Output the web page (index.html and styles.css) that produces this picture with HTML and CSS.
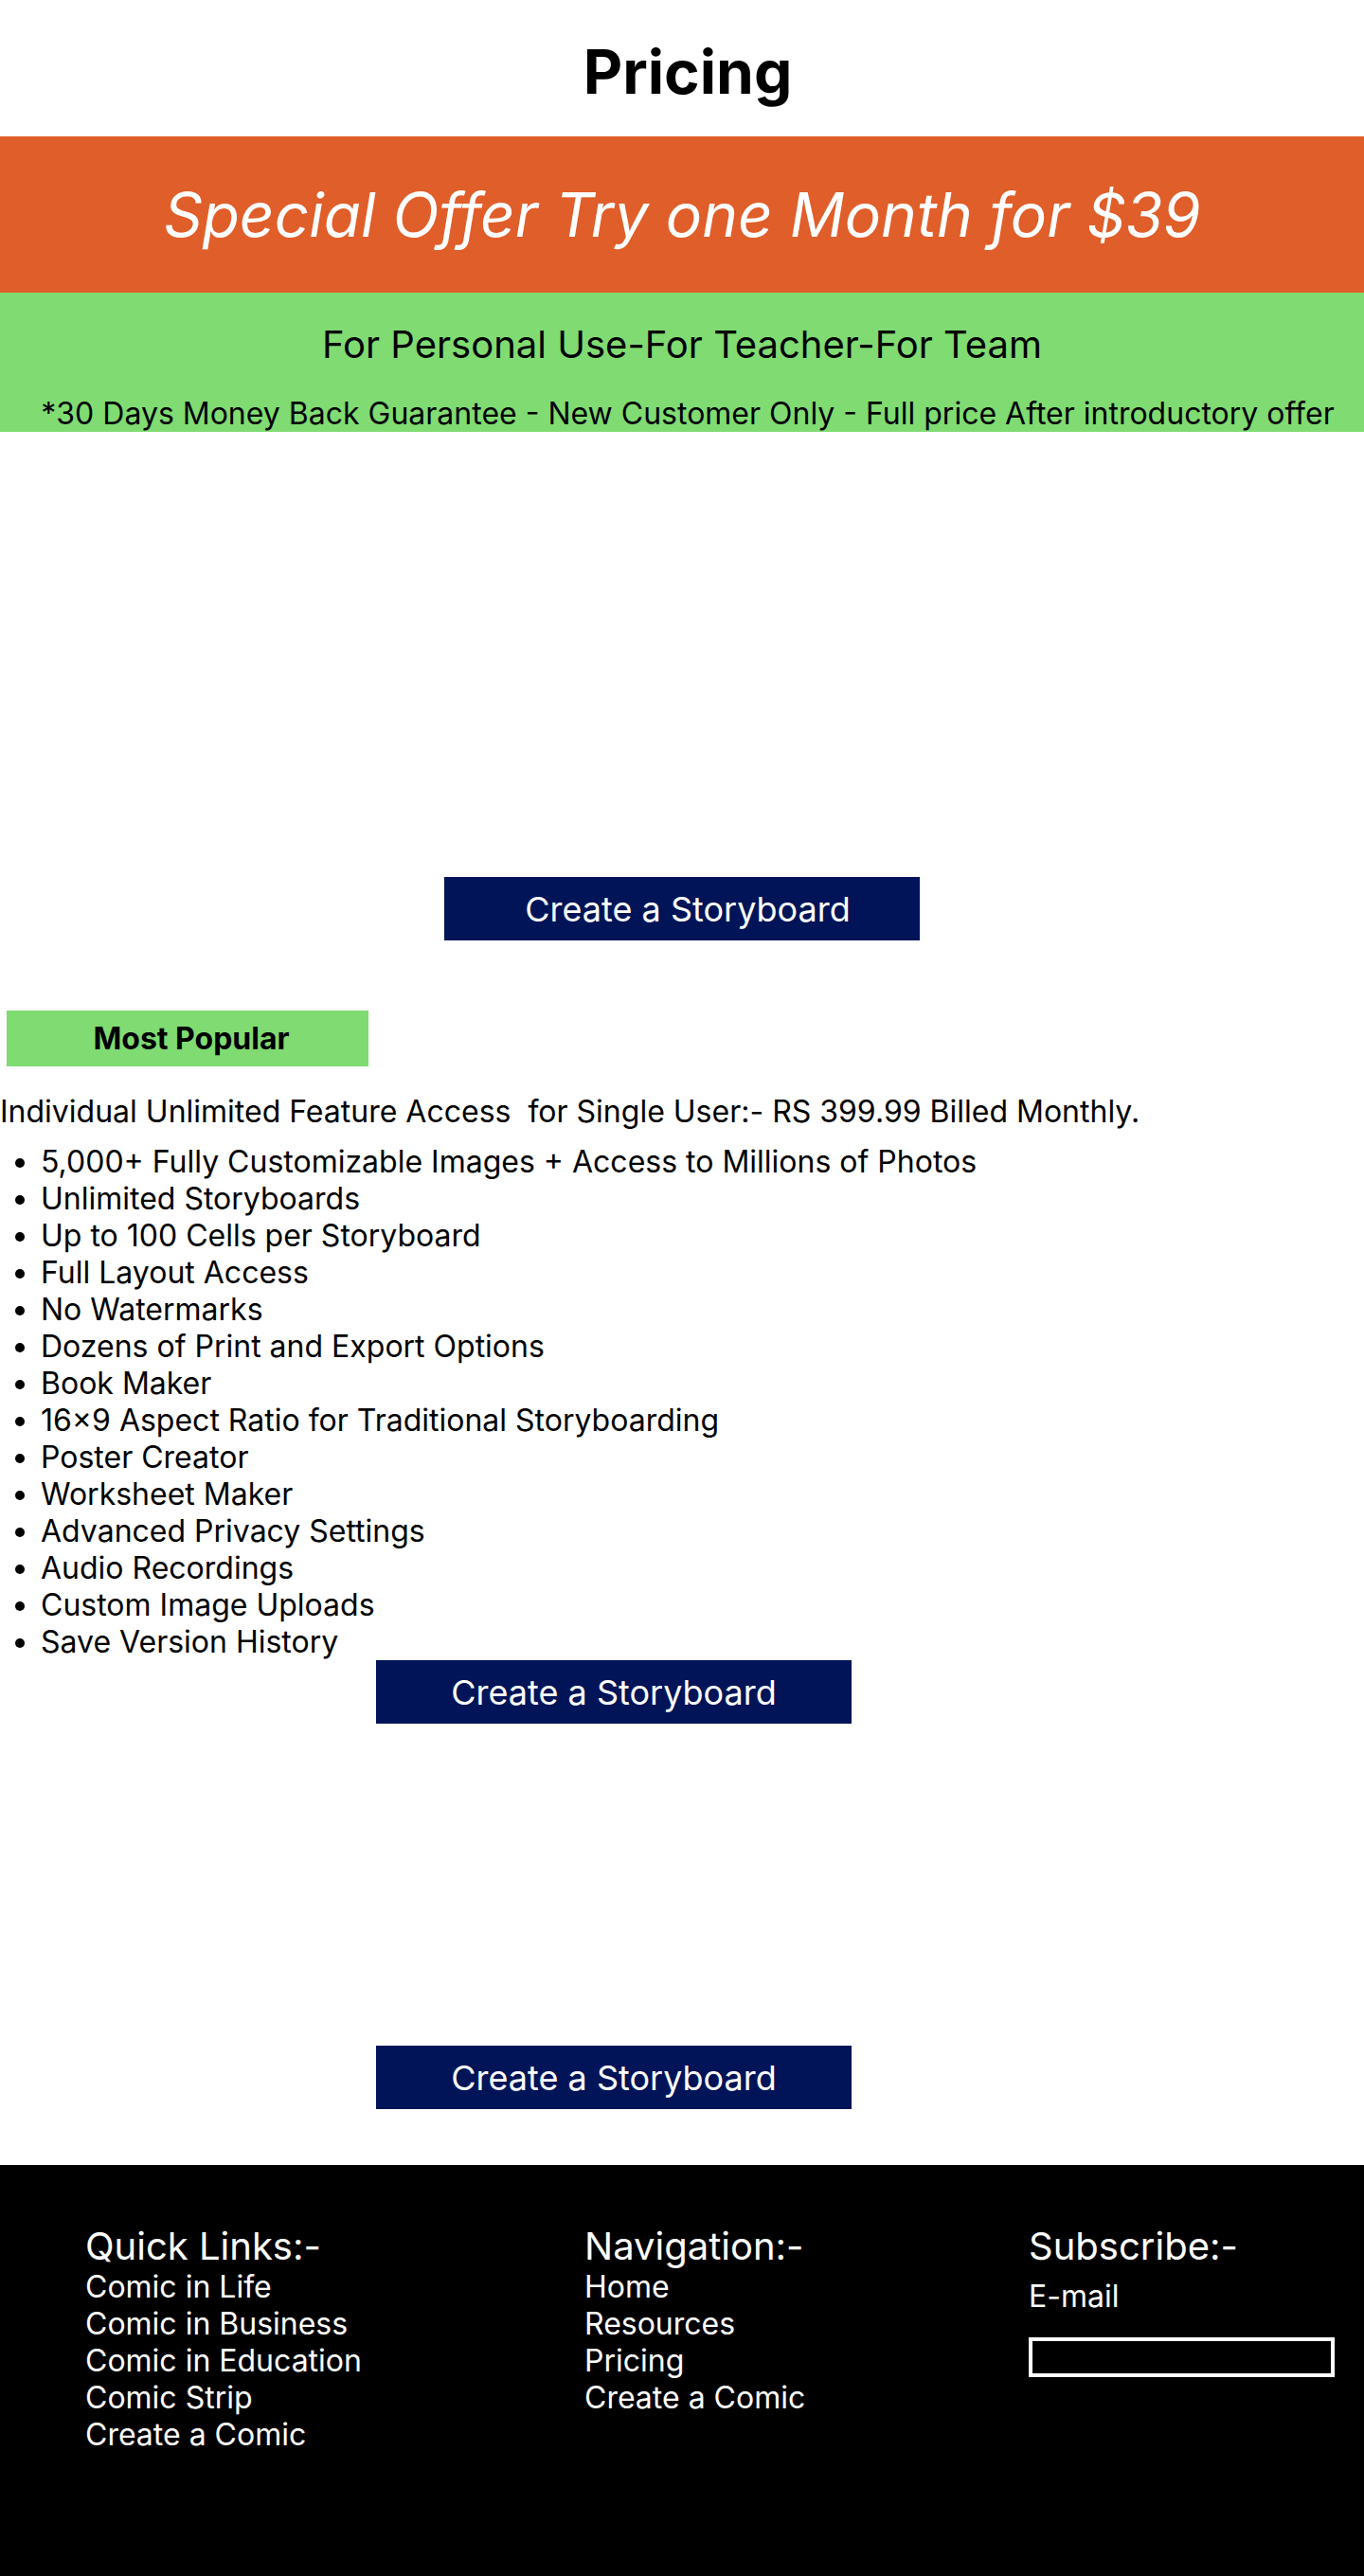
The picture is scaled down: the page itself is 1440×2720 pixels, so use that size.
FILE: index.html
```html
<!DOCTYPE html>
<html lang="en">
<head>
<meta charset="utf-8">
<title>Pricing</title>
<link rel="stylesheet" href="styles.css">
</head>
<body>
<header class="page-head">
  <h1 class="page-title">Pricing</h1>
</header>
<section class="offer">
  <p class="offer-text">Special Offer Try one Month for $39</p>
</section>
<section class="audience">
  <p class="audience-title">For Personal Use-For Teacher-For Team</p>
  <p class="audience-note">*30 Days Money Back Guarantee - New Customer Only - Full price After introductory offer</p>
</section>
<section class="hero-cta">
  <a class="cta cta-hero" href="#">Create a Storyboard</a>
</section>
<section class="plan">
  <div class="tag">Most Popular</div>
  <p class="plan-desc">Individual Unlimited Feature Access&nbsp; for Single User:- RS 399.99 Billed Monthly.</p>
  <ul class="features">
    <li>5,000+ Fully Customizable Images + Access to Millions of Photos</li>
    <li>Unlimited Storyboards</li>
    <li>Up to 100 Cells per Storyboard</li>
    <li>Full Layout Access</li>
    <li>No Watermarks</li>
    <li>Dozens of Print and Export Options</li>
    <li>Book Maker</li>
    <li>16×9 Aspect Ratio for Traditional Storyboarding</li>
    <li>Poster Creator</li>
    <li>Worksheet Maker</li>
    <li>Advanced Privacy Settings</li>
    <li>Audio Recordings</li>
    <li>Custom Image Uploads</li>
    <li>Save Version History</li>
  </ul>
  <div class="plan-cta"><a class="cta" href="#">Create a Storyboard</a></div>
  <div class="plan-cta plan-cta-last"><a class="cta" href="#">Create a Storyboard</a></div>
</section>
<footer class="footer">
  <div class="footer-col">
    <h2 class="footer-head">Quick Links:-</h2>
    <a class="footer-link" href="#">Comic in Life</a>
    <a class="footer-link" href="#">Comic in Business</a>
    <a class="footer-link" href="#">Comic in Education</a>
    <a class="footer-link" href="#">Comic Strip</a>
    <a class="footer-link" href="#">Create a Comic</a>
  </div>
  <div class="footer-col">
    <h2 class="footer-head">Navigation:-</h2>
    <a class="footer-link" href="#">Home</a>
    <a class="footer-link" href="#">Resources</a>
    <a class="footer-link" href="#">Pricing</a>
    <a class="footer-link" href="#">Create a Comic</a>
  </div>
  <div class="footer-col">
    <h2 class="footer-head">Subscribe:-</h2>
    <label class="email-label" for="email">E-mail</label>
    <input class="email-input" id="email" type="email">
  </div>
</footer>
</body>
</html>
```
FILE: styles.css
```css
* { box-sizing: border-box; }
html, body { margin: 0; padding: 0; }
body {
  font-family: Inter, "Noto Sans", sans-serif;
  color: #000;
  background: #fff;
}
p { margin: 0; }

.page-head { height: 144px; padding-top: 37px; }
.page-title {
  margin: 0;
  padding-left: 12px;
  font-size: 64px;
  line-height: 78px;
  font-weight: 700;
  text-align: center;
}

.offer {
  background: #e05e29;
  height: 165px;
  display: flex;
  align-items: center;
  justify-content: center;
}
.offer-text {
  color: #fff;
  font-size: 64px;
  font-style: italic;
  font-weight: 400;
}

.audience {
  background: #80db72;
  height: 147px;
  padding-top: 30px;
  text-align: center;
  overflow: hidden;
}
.audience-title { font-size: 40px; }
.audience-note {
  font-size: 32px;
  margin-top: 29px;
  padding-left: 12px;
  white-space: nowrap;
}

.hero-cta {
  padding-top: 470px;
  display: flex;
  justify-content: center;
}
.cta {
  display: flex;
  align-items: center;
  justify-content: center;
  width: 502px;
  height: 67px;
  background: #001457;
  color: #fff;
  font-size: 36px;
  text-decoration: none;
}
.cta-hero { padding-left: 12px; }

.plan { padding-top: 74px; }
.tag {
  margin-left: 7px;
  width: 382px;
  height: 59px;
  padding-left: 8px;
  background: #80db72;
  display: flex;
  align-items: center;
  justify-content: center;
  font-size: 32px;
  font-weight: 700;
}
.plan-desc { margin-top: 28px; font-size: 32px; }
.features {
  margin: 14px 0 0;
  padding-left: 43px;
  font-size: 32px;
}
.plan-cta { margin-top: 0; padding-left: 397px; }
.plan-cta-last { margin-top: 340px; }

.footer {
  margin-top: 59px;
  height: 434px;
  background: #000;
  color: #fff;
  padding: 63px 0 0 90px;
  display: grid;
  grid-template-columns: 527px 469px 323px;
  align-items: start;
}
.footer-col { display: flex; flex-direction: column; align-items: flex-start; }
.footer-head {
  margin: 0;
  font-size: 40px;
  font-weight: 400;
  line-height: 46px;
}
.footer-link {
  color: #fff;
  text-decoration: none;
  font-size: 32px;
}
.email-label { font-size: 32px; margin-top: 10px; }
.email-input {
  margin-top: 24px;
  width: 323px;
  height: 42px;
  background: #000;
  border: 4px solid #fff;
  color: #fff;
  padding: 0 8px;
}
```
